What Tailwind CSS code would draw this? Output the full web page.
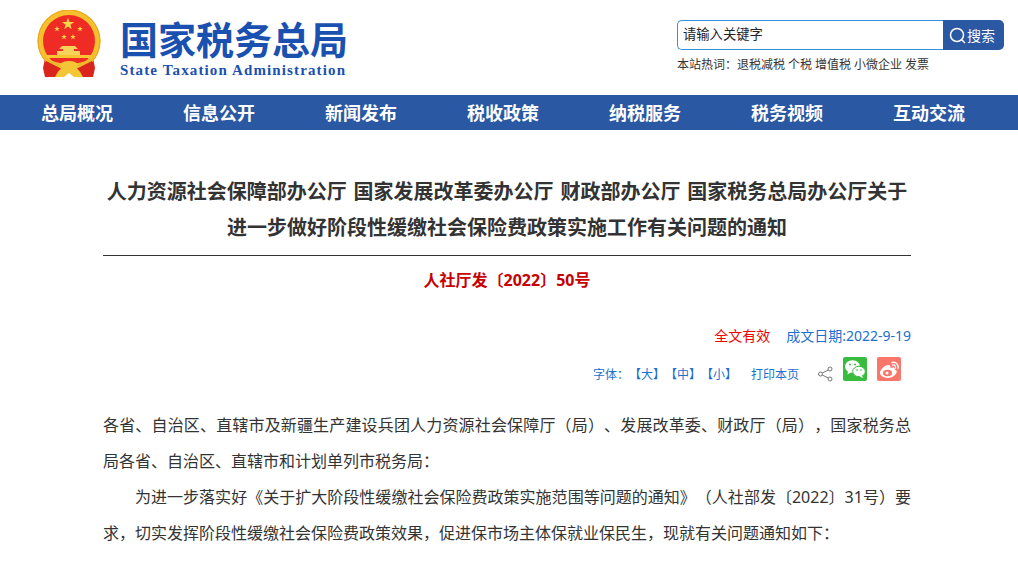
<!DOCTYPE html>
<html lang="zh-CN">
<head>
    <meta charset="UTF-8">
    <script src="https://cdn.jsdelivr.net/npm/@tailwindcss/browser@4"></script>
    <title>国家税务总局</title>
</head>
<body class="bg-white overflow-hidden font-['Noto_Sans','Noto_Sans_CJK_SC',sans-serif] text-[#333] [text-spacing-trim:space-all]">
    <!-- header -->
    <header class="flex justify-between h-[95px] pr-[14px]">
        <div class="flex pl-[37px] pt-[10px]">
            <svg class="w-[64px] h-[68px]" viewBox="0 0 64 68">
                <!-- ribbons behind the ring -->
                <path d="M8 48 L6 58 L8 67 L24 67 L30 58 L24 50 Z M56 48 L58 58 L56 67 L40 67 L34 58 L40 50 Z" fill="#d9251c"/>
                <circle cx="32" cy="31" r="31.500" fill="#f5bf2e"/>
                <circle cx="32" cy="31" r="31" fill="none" stroke="#e5a31d" stroke-width="1"/>
                <circle cx="32" cy="31" r="26" fill="#ee2b24"/>
                <polygon points="31,7.500 32.500,12 37.200,12 33.400,14.800 34.800,19.300 31,16.500 27.200,19.300 28.600,14.800 24.800,12 29.500,12" fill="#f8d648"/>
                <polygon points="20,16 20.700,18 22.900,18 21.100,19.300 21.800,21.400 20,20.100 18.200,21.400 18.900,19.300 17.100,18 19.300,18" fill="#f8d648"/>
                <polygon points="43,16 43.700,18 45.900,18 44.100,19.300 44.800,21.400 43,20.100 41.200,21.400 41.900,19.300 40.100,18 42.300,18" fill="#f8d648"/>
                <polygon points="27,24 27.700,26 29.900,26 28.100,27.300 28.800,29.400 27,28.100 25.200,29.400 25.900,27.300 24.100,26 26.300,26" fill="#f8d648"/>
                <polygon points="36,24 36.700,26 38.900,26 37.100,27.300 37.800,29.400 36,28.100 34.200,29.400 34.900,27.300 33.100,26 35.300,26" fill="#f8d648"/>
                <path d="M25 36 H38 L41 39 H37 V41 H43 V45 H20 V41 H26 V39 H22 Z" fill="#f7d25a"/>
                <rect x="9" y="45" width="46" height="3" fill="#f6c531"/>
                <path d="M5 46 Q32 62 59 46 L54 52 Q32 63 10 52 Z" fill="#f0b92c"/>
                <path d="M9 51 L8 58 L11 67 L22 67 L27 60 Z M55 51 L56 58 L53 67 L42 67 L37 60 Z" fill="#d9251c"/>
                <path d="M18 67 Q23 56 32 54 Q41 56 46 67 H37 L32 63 L27 67 Z" fill="#f4c535"/>
                <ellipse cx="32" cy="55" rx="9" ry="4" fill="#f4c535"/>
            </svg>
            <div class="ml-[19px] pt-[7px] text-[#1a50b0]">
                <div class="h-[44px] text-[38px] leading-[44px] font-bold whitespace-nowrap">国家税务总局</div>
                <div class="mt-[1px] h-[17px] text-[15px] leading-[17px] font-bold font-['Liberation_Serif',serif] tracking-[1.13px] whitespace-nowrap">State Taxation Administration</div>
            </div>
        </div>
        <div class="w-[327px] pt-[20px] text-[12px]">
            <div class="flex w-[327px] h-[30px]">
                <div class="flex-1 border border-[#3a8fdc] border-r-0 rounded-l-[5px] pl-[5px] text-[13.300px] leading-[26px] text-[#222]">请输入关键字</div>
                <div class="w-[61px] bg-[#2a58a3] rounded-r-[5px] flex items-center pl-[6px] text-white text-[14px]">
                    <svg class="w-[17px] h-[17px] mr-[1px]" viewBox="0 0 17 17" fill="none" stroke="#fff" stroke-width="1.500"><circle cx="8" cy="8" r="6.500"/><path d="M12.500 12.500 L16 16"/></svg>
                    <span>搜索</span>
                </div>
            </div>
            <div class="mt-[6px] leading-[18px] text-[#333] whitespace-nowrap">本站热词：<span class="mr-[3px]">退税减税</span><span class="mr-[3px]">个税</span><span class="mr-[3px]">增值税</span><span class="mr-[3px]">小微企业</span><span>发票</span></div>
        </div>
    </header>

    <!-- nav -->
    <nav class="h-[35px] bg-[#2a58a3] pl-[6px] grid grid-cols-[repeat(7,142px)] text-white text-[18px] font-bold leading-[36px] text-center">
        <a>总局概况</a><a>信息公开</a><a>新闻发布</a><a>税收政策</a><a>纳税服务</a><a>税务视频</a><a>互动交流</a>
    </nav>

    <!-- article -->
    <main class="w-[808px] ml-[103px]">
        <div class="pt-[44px] h-[126px] border-b border-[#333] text-center text-[20px] font-bold leading-[36px] whitespace-nowrap [word-spacing:1.700px]">
            <p>人力资源社会保障部办公厅 国家发展改革委办公厅 财政部办公厅 国家税务总局办公厅关于</p>
            <p>进一步做好阶段性缓缴社会保险费政策实施工作有关问题的通知</p>
        </div>
        <p class="mt-[11px] text-center text-[16px] font-bold leading-[26px] text-[#c80000]">人社厅发〔2022〕50号</p>
        <div class="mt-[31px] flex justify-end text-[14px] leading-[24px]">
            <span class="text-[#f00000]">全文有效</span>
            <span class="ml-[16px] text-[#1a6fd0]">成文日期:2022-9-19</span>
        </div>
        <div class="mt-[9px] h-[30px] flex justify-end items-start text-[12px] text-[#1a6fd0] pr-[10px]">
            <span class="mt-[9px] leading-[18px]">字体：【大】【中】【小】</span>
            <span class="mt-[9px] ml-[14px] leading-[18px]">打印本页</span>
            <svg class="mt-[9px] ml-[19px] w-[15px] h-[16px]" viewBox="0 0 15 16" fill="none" stroke="#777" stroke-width="1"><circle cx="2.500" cy="8" r="2"/><circle cx="12" cy="3" r="2"/><circle cx="12" cy="13" r="2"/><path d="M4.300 7 L10.300 4 M4.300 9 L10.300 12"/></svg>
            <div class="ml-[10px] w-[24px] h-[24px] rounded-[2px] bg-[#38bb3e] flex items-center justify-center">
                <svg class="w-[22px] h-[20px]" viewBox="0 0 22 20" fill="#fff">
                    <ellipse cx="8.500" cy="7.500" rx="7.500" ry="6.300"/><path d="M4 12 L3.500 15.500 L7.500 13 Z"/>
                    <ellipse cx="15" cy="12.500" rx="6.300" ry="5.200" stroke="#38bb3e" stroke-width="1"/><path d="M18 16.500 L19 19 L15.500 17.500 Z"/>
                    <circle cx="6" cy="5.500" r="1" fill="#38bb3e"/><circle cx="11" cy="5.500" r="1" fill="#38bb3e"/><circle cx="13" cy="11" r="0.800" fill="#38bb3e"/><circle cx="17" cy="11" r="0.800" fill="#38bb3e"/>
                </svg>
            </div>
            <div class="ml-[10px] w-[24px] h-[24px] rounded-[2px] bg-[#f8766a] flex items-center justify-center">
                <svg class="w-[21px] h-[19px]" viewBox="0 0 21 19" fill="none">
                    <path d="M9 18 C4 18 1 15.500 1 12.800 C1 9.500 6 5 9.500 5 C11.500 5 11.800 6.500 11.300 8 C13.500 7 16 7.300 16 9.500 C18 10.200 18 11.500 17.500 12.800 C16.500 15.500 13 18 9 18 Z" fill="#fff"/>
                    <ellipse cx="8.500" cy="13" rx="4.500" ry="3.200" fill="#f8766a"/>
                    <circle cx="8" cy="13" r="1.500" fill="#fff"/>
                    <path d="M13 2.500 C17 1.500 20 5 19 8.500 M13.500 5 C15.500 4.500 17 6 16.500 8" stroke="#fff" stroke-width="1.400" stroke-linecap="round"/>
                </svg>
            </div>
        </div>
        <div class="mt-[20px] text-[16px] leading-[36px] text-[#333] text-justify">
            <p>各省、自治区、直辖市及新疆生产建设兵团人力资源社会保障厅（局）、发展改革委、财政厅（局），国家税务总局各省、自治区、直辖市和计划单列市税务局：</p>
            <p class="indent-[32px]">为进一步落实好《关于扩大阶段性缓缴社会保险费政策实施范围等问题的通知》（人社部发〔2022〕31号）要求，切实发挥阶段性缓缴社会保险费政策效果，促进保市场主体保就业保民生，现就有关问题通知如下：</p>
        </div>
    </main>
</body>
</html>
